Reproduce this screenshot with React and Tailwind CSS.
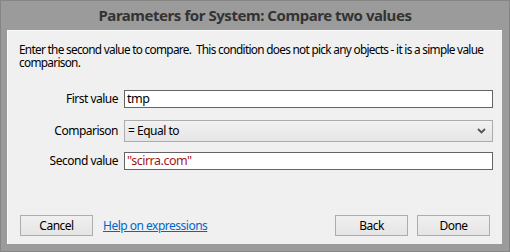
export default function App() {
  const font = { fontFamily: '"Noto Sans", "Open Sans", sans-serif' };
  return (
    <div className="w-[510px] h-[252px] bg-[#9b9b9b] border border-[#858585] flex flex-col" style={font}>
      <div className="h-[29px] flex items-center justify-center text-[15px] font-bold text-[#333333] tracking-[-0.45px]">
        Parameters for System: Compare two values
      </div>
      <div className="ml-[6px] mr-[7px] h-[214px] bg-[#f0f0f0] border-l border-t border-[#fafafa] flex flex-col text-[12px] text-black tracking-[-0.5px]">
        <div className="pl-[11px] pt-[12px] leading-[13px] whitespace-nowrap text-[11.8px] tracking-[-0.7px]">
          <div>Enter the second value to compare.&nbsp; This condition does not pick any objects - it is a simple value</div>
          <div>comparison.</div>
        </div>
        <div className="mt-[21px] flex items-center">
          <div className="w-[116px] text-right pr-[6px]">First value</div>
          <div className="w-[369px] h-[18px] bg-white border border-[#646464] flex items-center pl-[2px] text-[12.5px]">tmp</div>
        </div>
        <div className="mt-[12px] flex items-center">
          <div className="w-[116px] text-right pr-[6px]">Comparison</div>
          <div className="w-[369px] h-[22px] bg-gradient-to-b from-[#f2f2f2] to-[#e5e5e5] border border-[#acacac] flex items-center justify-between pl-[3px] pr-[6px]">
            <span>= Equal to</span>
            <svg width="9" height="6" viewBox="0 0 9 6"><path d="M1 1 L4.5 4.5 L8 1" stroke="#555" strokeWidth="1.8" fill="none" /></svg>
          </div>
        </div>
        <div className="mt-[10px] flex items-center">
          <div className="w-[116px] text-right pr-[6px]">Second value</div>
          <div className="w-[369px] h-[18px] bg-white border border-[#646464] flex items-center pl-[2px] text-[12.5px] text-[#a31515]">"scirra.com"</div>
        </div>
        <div className="mt-auto mb-[8px] flex items-center px-[12px]">
          <button className="w-[73px] h-[21px] bg-gradient-to-b from-[#f0f0f0] to-[#e5e5e5] border border-[#adadad] text-[12px]">Cancel</button>
          <span className="ml-[10px] text-[#0066cc] underline">Help on expressions</span>
          <div className="flex-1" />
          <button className="w-[73px] h-[21px] bg-gradient-to-b from-[#f0f0f0] to-[#e5e5e5] border border-[#adadad] text-[12px]">Back</button>
          <button className="ml-[9px] w-[73px] h-[21px] bg-gradient-to-b from-[#f0f0f0] to-[#e5e5e5] border border-[#adadad] text-[12px]">Done</button>
        </div>
      </div>
    </div>
  );
}
